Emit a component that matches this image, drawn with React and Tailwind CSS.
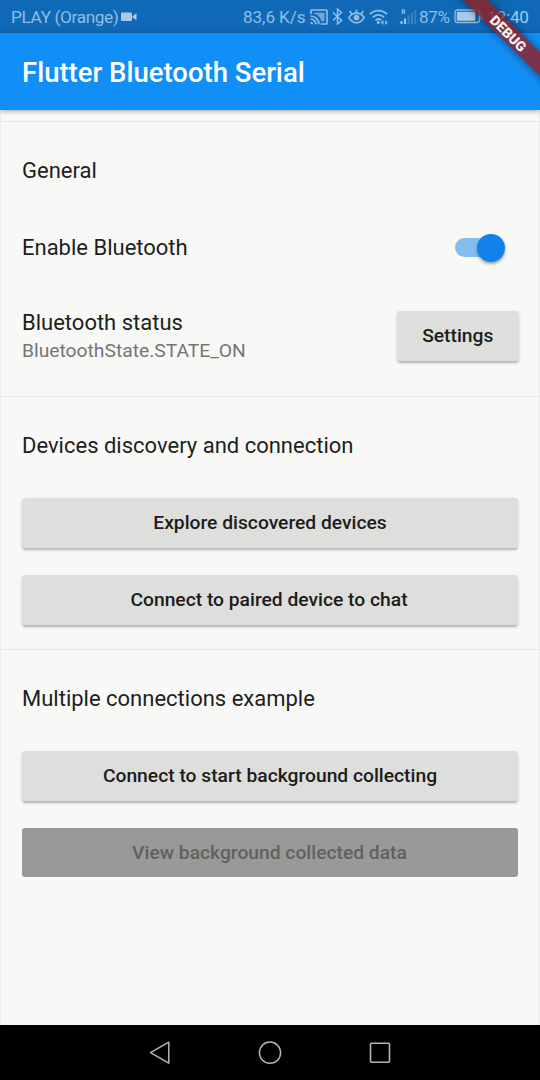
import React from "react";

function StatusBar() {
  return (
    <div className="flex h-[33px] shrink-0 items-center bg-[#0f69b7] pl-[11px] pr-[11px] text-[17.2px] leading-[33px] text-[#92bde2]">
      <span className="w-[109px] whitespace-nowrap pt-px tracking-[-0.35px]">PLAY (Orange)</span>
      <svg className="ml-px" width="16" height="10" viewBox="0 0 16 10" fill="#a9cae7">
        <rect x="0" y="0.5" width="11" height="8.5" rx="1" />
        <path d="M11 4.7 15.5 1v7.6z" />
      </svg>
      <span className="ml-auto w-[64px] whitespace-nowrap pt-px tracking-[-0.1px]">83,6 K/s</span>
      <svg className="ml-[3px] shrink-0" width="18" height="16" viewBox="0 0 18 16" fill="none" stroke="currentColor" strokeWidth="1.7">
        <path d="M1 5V1.8q0-.8.8-.8h14.4q.8 0 .8.8v12.4q0 .8-.8.8H10.5" />
        <path d="M3.5 3.7h11v8.6h-3.2c-.8-4-3.7-7-7.8-7.7z" fill="currentColor" stroke="none" opacity=".75" />
        <path d="M.6 7c4.7 0 8.3 3.6 8.3 8.3M.6 10c2.9 0 5.3 2.3 5.3 5.3" />
        <path d="M.6 12.7a2.6 2.6 0 0 1 2.6 2.6H.6z" fill="currentColor" stroke="none" />
      </svg>
      <svg className="ml-[4px] shrink-0" width="11" height="17" viewBox="0 0 11 17" fill="none" stroke="currentColor" strokeWidth="1.5">
        <path d="M1 4.5l8.5 8-4 3.5V1l4 3.5-8.5 8" />
      </svg>
      <svg className="ml-[5px] shrink-0" width="17" height="17" viewBox="0 0 17 17" fill="none" stroke="currentColor" strokeWidth="1.7">
        <path d="M.9 9.6c4-5.9 11.2-5.9 15.2 0-4 7-11.2 7-15.2 0z" />
        <circle cx="8.5" cy="9.6" r="2.9" fill="currentColor" stroke="none" />
        <path d="M8.5 5.5V1.5M4 6.3 1.6 3M13 6.3 15.4 3" />
      </svg>
      <svg className="ml-[4px] shrink-0" width="19" height="16" viewBox="0 0 19 16" fill="none" stroke="currentColor" strokeWidth="1.8">
        <path d="M.8 5.2c5-4.8 12.2-4.8 17.2 0M3.7 8.4c3.4-3.2 8-3.2 11.4 0M6.5 11.3c1.8-1.6 4-1.6 5.8 0" />
        <circle cx="9.3" cy="13.6" r="1.5" fill="currentColor" stroke="none" />
        <path d="M11.8 13.5l2.6-2.4v4.8zM18.7 13.5l-2.6-2.4v4.8z" fill="currentColor" stroke="none" />
      </svg>
      <svg className="ml-[12px] shrink-0" width="17" height="17" viewBox="0 0 17 17">
        <path d="M2.3 6V1.7h1.7q1.2 1.2 0 2.2H2.6M3.7 3.9 5 6" fill="none" stroke="currentColor" strokeWidth="1.1" />
        <path d="M.5 13h2v3h-2zM4 10.5h2V16H4z" fill="#a9cae7" />
        <path d="M7.5 7h2v9h-2zM11 4.5h2V16h-2zM14.5 2h1.7v14h-1.7z" fill="currentColor" opacity=".32" />
      </svg>
      <span className="ml-[2px] w-[32px] whitespace-nowrap pt-px tracking-[-0.4px]">87%</span>
      <svg className="ml-[3px] shrink-0" width="29" height="15" viewBox="0 0 29 15">
        <rect x="1" y="1" width="24.5" height="12.5" rx="2.5" fill="none" stroke="currentColor" strokeWidth="1.3" />
        <rect x="2.8" y="2.8" width="18.5" height="9" rx="1" fill="#a9cae7" />
        <path d="M26.8 4h1.4v6.5h-1.4z" fill="currentColor" />
      </svg>
      <span className="ml-[4px] w-[42px] whitespace-nowrap pt-px tracking-[-0.2px] text-[#a4c8e7]">12:40</span>
    </div>
  );
}

function Tile({ children }) {
  return <div className="flex h-[77px] items-center px-[22px]">{children}</div>;
}

function Divider() {
  return (
    <div className="flex h-[22px] items-center">
      <div className="h-px w-full bg-[#e6e6e4]" />
    </div>
  );
}

function Title({ children }) {
  return <div className="whitespace-nowrap text-[22px] leading-[26px] text-[#1e1e1d]">{children}</div>;
}

function Raised({ children, className = "w-full" }) {
  return (
    <button
      className={
        "h-[50px] rounded-[3px] bg-[#dededc] pt-px text-[19.25px] font-medium text-[#1c1c1b] shadow-[0_3px_2px_-1px_rgba(0,0,0,0.14),0_2px_3px_rgba(0,0,0,0.12),0_1px_4px_rgba(0,0,0,0.06)] " +
        className
      }
    >
      {children}
    </button>
  );
}

function DebugBanner() {
  return (
    <div className="pointer-events-none absolute right-0 top-0 z-20 h-[120px] w-[120px] overflow-hidden">
      <div className="absolute left-[17.5px] top-[24.2px] flex h-[16.5px] w-[140px] rotate-45 items-center justify-center bg-[#951d20]/80 pl-[2px] pt-px text-[14px] font-black leading-none text-white/95 shadow-[0_0_8px_rgba(0,0,0,0.5)]">
        DEBUG
      </div>
    </div>
  );
}

export default function App() {
  return (
    <div
      className="relative flex h-[1080px] w-[540px] flex-col overflow-hidden bg-[#f8f8f6]"
      style={{ fontFamily: 'Roboto, "Liberation Sans", sans-serif' }}
    >
      <StatusBar />
      <header className="z-10 flex h-[77px] shrink-0 items-center bg-[#128ef7] px-[22px] pt-[2px] text-[27.5px] font-medium text-white shadow-[0_1px_5px_rgba(0,0,0,0.35)]">
        <h1 className="whitespace-nowrap">Flutter Bluetooth Serial</h1>
      </header>
      <main className="flex-1 border-x border-[#ededeb]">
        <div className="-mx-px">
          <Divider />
          <Tile>
            <Title>General</Title>
          </Tile>
          <Tile>
            <Title>Enable Bluetooth</Title>
            <div className="ml-auto mr-[14px] flex h-[19px] w-[49px] items-center justify-end rounded-full bg-[#86bdf1]">
              <div className="-mr-px h-[28px] w-[28px] shrink-0 rounded-full bg-[#1182ea] shadow-[0_2px_3px_rgba(0,0,0,0.35)]" />
            </div>
          </Tile>
          <div className="flex h-[99px] items-center justify-between px-[22px]">
            <div className="pt-[2px]">
              <Title>Bluetooth status</Title>
              <div className="mt-[2px] text-[19.25px] leading-[26px] text-[#757574]">BluetoothState.STATE_ON</div>
            </div>
            <Raised className="mr-[-0.5px] w-[121.5px]">Settings</Raised>
          </div>
          <Divider />
          <Tile>
            <Title>Devices discovery and connection</Title>
          </Tile>
          <Tile>
            <Raised>Explore discovered devices</Raised>
          </Tile>
          <Tile>
            <Raised className="w-full pr-[8px] pl-[6px]">Connect to paired device to chat</Raised>
          </Tile>
          <Divider />
          <Tile>
            <Title>Multiple connections example</Title>
          </Tile>
          <Tile>
            <Raised>Connect to start background collecting</Raised>
          </Tile>
          <Tile>
            <button disabled className="h-[49px] w-full rounded-[3px] bg-[#999997] pl-[6px] pr-[7px] pt-[2px] text-[19.25px] font-medium text-[#616160]">
              View background collected data
            </button>
          </Tile>
        </div>
      </main>
      <nav className="flex h-[55px] shrink-0 items-center justify-center gap-[86px] bg-black">
        <svg width="24" height="24" viewBox="0 0 24 24" fill="none" stroke="#b4b4b4" strokeWidth="1.5" strokeLinejoin="round">
          <path d="M20.8 1.2v21L2.5 11.7z" />
        </svg>
        <svg width="24" height="24" viewBox="0 0 24 24" fill="none" stroke="#b4b4b4" strokeWidth="1.5">
          <circle cx="12" cy="11.7" r="10.6" />
        </svg>
        <svg width="24" height="24" viewBox="0 0 24 24" fill="none" stroke="#b4b4b4" strokeWidth="1.6">
          <rect x="2.5" y="2.2" width="19" height="19" rx="1" />
        </svg>
      </nav>
      <DebugBanner />
    </div>
  );
}
